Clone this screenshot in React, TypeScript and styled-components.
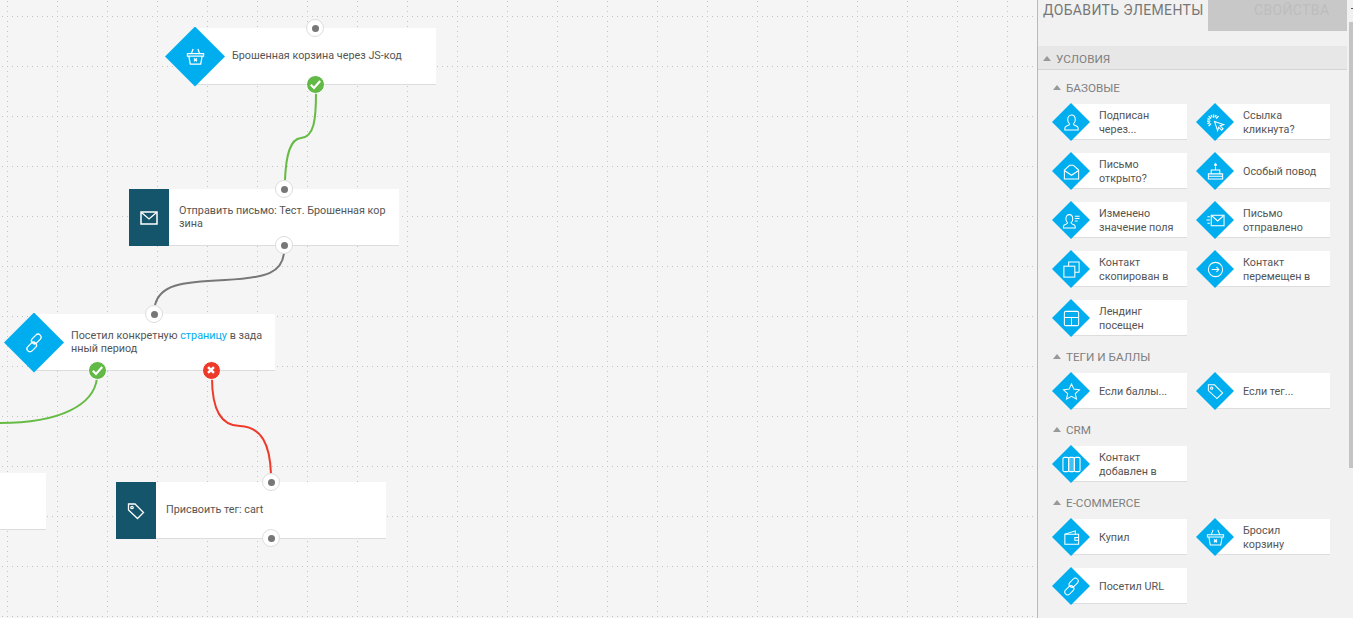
import React from "react";
import styled, { createGlobalStyle } from "styled-components";

const Global = createGlobalStyle`
  html, body { margin: 0; padding: 0; height: 100%; overflow: hidden; background: #f5f5f5; }
  #root { height: 100%; }
  * { box-sizing: border-box; }
`;

const Page = styled.div`
  display: flex;
  width: 1353px;
  height: 618px;
  overflow: hidden;
  font-family: Roboto, "Liberation Sans", sans-serif;
`;
const Canvas = styled.main`
  position: relative;
  flex: 0 0 1037px;
  height: 618px;
  background: #f5f5f5;
  overflow: hidden;
`;
const Layer = styled.svg`
  position: absolute;
  left: 0;
  top: 0;
`;
const Node = styled.div<{ $x: number; $y: number; $w: number }>`
  position: absolute;
  left: ${(p) => p.$x}px;
  top: ${(p) => p.$y}px;
  width: ${(p) => p.$w}px;
  height: 57px;
  display: flex;
  align-items: center;
`;
const NodeDiamond = styled.div`
  flex: 0 0 60px;
  height: 60px;
  margin-right: -30px;
  position: relative;
  z-index: 1;
  display: flex;
  align-items: center;
  justify-content: center;
  background: #00aeef;
  clip-path: polygon(50% 0, 100% 50%, 50% 100%, 0 50%);
  color: #fff;
`;
const NodeSquare = styled.div`
  flex: 0 0 40px;
  height: 57px;
  display: flex;
  align-items: center;
  justify-content: center;
  background: #15556b;
  color: #fff;
`;
const NodeCard = styled.div<{ $pad: number }>`
  flex: 1;
  height: 57px;
  padding: 0 5px 1px ${(p) => p.$pad}px;
  display: flex;
  align-items: center;
  background: #fff;
  border-bottom: 1px solid #ddd;
  font-size: 10.8px;
  line-height: 13px;
  color: #555;
  white-space: nowrap;
`;
const NodeText = styled.span`
  display: block;
`;
const Link = styled.span`
  color: #00aeef;
`;
const Port = styled.div<{ $x: number; $y: number }>`
  position: absolute;
  left: ${(p) => p.$x - 9}px;
  top: ${(p) => p.$y - 9}px;
  width: 18px;
  height: 18px;
  z-index: 2;
  border-radius: 50%;
  background: #fff;
  border: 1px solid #ddd;
  display: flex;
  align-items: center;
  justify-content: center;
  &::after {
    content: "";
    width: 7px;
    height: 7px;
    border-radius: 50%;
    background: #777;
  }
`;
const Result = styled.div<{ $x: number; $y: number; $bg: string }>`
  position: absolute;
  left: ${(p) => p.$x - 9.5}px;
  top: ${(p) => p.$y - 9.5}px;
  width: 19px;
  height: 19px;
  z-index: 2;
  border-radius: 50%;
  background: ${(p) => p.$bg};
  border: 1px solid #fff;
  display: flex;
  align-items: center;
  justify-content: center;
  color: #fff;
`;

const Panel = styled.aside`
  position: relative;
  flex: 0 0 316px;
  height: 618px;
  background: #f1f1f1;
  border-left: 1px solid #b9b9b9;
  overflow: hidden;
  &::after {
    content: "";
    position: absolute;
    right: 0;
    top: 8px;
    width: 2px;
    height: 1px;
    background: #555;
  }
`;
const Tabs = styled.div`
  display: flex;
  height: 31px;
  width: 309px;
`;
const TabActive = styled.div`
  flex: 0 0 170px;
  padding: 1px 0 0 5px;
  font-size: 14px;
  letter-spacing: 0.35px;
  line-height: 19px;
  color: #777;
  white-space: nowrap;
`;
const TabIdle = styled.div`
  flex: 0 0 139px;
  padding: 1px 0 0 46px;
  background: #c8c8c8;
  font-size: 14px;
  letter-spacing: 0.35px;
  line-height: 19px;
  color: #bdbdbd;
`;
const SectionBar = styled.div`
  width: 309px;
  height: 24px;
  margin-top: 15px;
  padding: 2px 0 0 5px;
  display: flex;
  align-items: center;
  gap: 5px;
  background: #e7e7e7;
  border-bottom: 1px solid #d4d4d4;
  font-size: 11.7px;
  color: #808080;
`;
const Caret = styled.i`
  width: 0;
  height: 0;
  border-left: 4px solid transparent;
  border-right: 4px solid transparent;
  border-bottom: 5px solid #999;
  margin-top: -1px;
`;
const Groups = styled.div`
  padding: 10px 0 0 15px;
  display: flex;
  flex-direction: column;
  gap: 13px;
`;
const GroupHead = styled.div`
  height: 16px;
  margin-bottom: 8px;
  display: flex;
  align-items: center;
  gap: 5px;
  font-size: 11.7px;
  color: #808080;
`;
const ItemGrid = styled.div`
  display: grid;
  margin-left: -1px;
  grid-template-columns: 135px 134px;
  column-gap: 9px;
  row-gap: 13px;
`;
const Item = styled.div`
  height: 36px;
  display: flex;
  align-items: center;
`;
const ItemDiamond = styled.div`
  flex: 0 0 38px;
  height: 38px;
  margin-right: -19px;
  position: relative;
  z-index: 1;
  display: flex;
  align-items: center;
  justify-content: center;
  background: #00aeef;
  clip-path: polygon(50% 0, 100% 50%, 50% 100%, 0 50%);
  color: #fff;
`;
const ItemCard = styled.div`
  flex: 1;
  height: 36px;
  padding: 3px 4px 0 28px;
  display: flex;
  align-items: center;
  background: #fff;
  border-bottom: 1px solid #ddd;
  font-size: 10.8px;
  line-height: 14px;
  color: #555;
`;
const ScrollThumb = styled.div`
  position: absolute;
  right: 0;
  top: 22px;
  width: 4px;
  height: 446px;
  background: #c4c4c4;
`;

type IconName =
  | "basket" | "mail" | "link" | "tag" | "user" | "click" | "mailOpen" | "cake"
  | "userEdit" | "mailFast" | "copy" | "move" | "layout" | "star" | "columns" | "wallet";

const paths: Record<IconName, React.ReactNode> = {
  basket: (
    <>
      <path d="M1.500 7h17v2.500h-17z" />
      <path d="M3 9.500 4.500 18h11L17 9.500" />
      <path d="M5.500 7 7.500 2M14.500 7 12.500 2" />
      <path d="M8.500 12l3 3M11.500 12l-3 3" strokeWidth="1.500" />
    </>
  ),
  mail: (
    <>
      <rect x="2" y="4" width="16" height="12" strokeWidth="1.500" />
      <path d="M2.500 4.500 10 11l7.500-6.500" />
    </>
  ),
  link: (
    <>
      <rect x="2.250" y="11" width="11" height="6" rx="3" transform="rotate(-45 7.750 14)" />
      <rect x="6.750" y="3" width="11" height="6" rx="3" transform="rotate(-45 12.250 6)" />
    </>
  ),
  tag: (
    <>
      <path d="M2.500 3h6.500l8.500 8.500-6 6L2.500 9z" />
      <circle cx="6" cy="6.500" r="1.200" />
    </>
  ),
  user: (
    <path d="M3 18v-2.200c0-1.300 1.200-2 3-2.600 1.200-.4 2-.8 2-1.700-1.200-1-2-2.700-2-4.500C6 4 7.600 2 10 2s4 2 4 5c0 1.800-.8 3.500-2 4.500 0 .9.8 1.300 2 1.700 1.800.6 3 1.300 3 2.600V18z" />
  ),
  click: (
    <>
      <path d="M9 9l9.500 3.200-3.700 1.300 3.200 3.200-1.500 1.500-3.200-3.200L12.200 18.500z" />
      <path d="M8 1.500v3.500M2.800 3.300l2.500 2.500M1 8.500h3.500M2.800 13.700l2.500-2.500M13.200 3.300l-2.500 2.500M5.300 2l1 2.500M10.700 2l-1 2.500M1.500 5.800l2.500 1M1.500 11.200l2.500-1" strokeWidth="1.400" />
    </>
  ),
  mailOpen: (
    <>
      <path d="M2.500 8.500 8 3.500h4l5.500 5V18h-15z" />
      <path d="M2.500 9 10 14l7.500-5" />
    </>
  ),
  cake: (
    <>
      <path d="M2.500 12.500h15V18h-15zM5.500 8.500h9v4h-9z" />
      <path d="M2.500 15h15M10 8.500V5" />
      <path d="M10 1.500l1 1.700-1 1.100-1-1.100z" fill="currentColor" />
    </>
  ),
  userEdit: (
    <>
      <path d="M1.500 18v-1.800c0-1.200 1-1.800 2.600-2.300 1.100-.4 1.800-.7 1.800-1.500-1.100-.9-1.800-2.500-1.800-4.100C4.100 5.600 5.500 3.800 7.700 3.800s3.600 1.800 3.600 4.500c0 1.600-.7 3.200-1.800 4.100 0 .8.7 1.100 1.800 1.500 1.600.5 2.600 1.100 2.600 2.300V18z" />
      <path d="M13.500 5.500h5M13.500 8h5M13.500 10.500h3" />
    </>
  ),
  mailFast: (
    <>
      <rect x="5.500" y="4.500" width="13.500" height="11" />
      <path d="M6 5l6.250 5.500L18.500 5" />
      <path d="M1.500 6h2.500M.5 9.500h3.500M1.500 13h2.500" />
    </>
  ),
  copy: (
    <>
      <path d="M7 6.500V2h11v11h-4.500" />
      <rect x="2" y="6.500" width="11.500" height="11.500" />
    </>
  ),
  move: (
    <>
      <circle cx="10" cy="10" r="7.500" />
      <path d="M6 10h7.500M11 7.500l2.500 2.500-2.500 2.500" />
    </>
  ),
  layout: (
    <>
      <rect x="2.500" y="2.500" width="15" height="15" rx="1.500" />
      <path d="M2.500 9h15M10 9v8.500" />
    </>
  ),
  star: <path d="M10 2l2.500 5.500 5.800.7-4.300 4 1.200 5.800L10 15.100 4.800 18 6 12.200l-4.300-4 5.800-.7z" />,
  columns: (
    <>
      <rect x="1" y="2.500" width="6" height="15" rx="1.500" />
      <rect x="7" y="2.500" width="6" height="15" rx="1.500" fill="rgba(255,255,255,.25)" />
      <rect x="13" y="2.500" width="6" height="15" rx="1.500" />
    </>
  ),
  wallet: (
    <>
      <path d="M3 6.500h14.500V17H3z" />
      <path d="M3 6.500 14 3v3.500" />
      <path d="M17.500 10h-4v3h4" />
    </>
  ),
};

const Icon = ({ name, size, stroke = 1.3 }: { name: IconName; size: number; stroke?: number }) => (
  <svg width={size} height={size} viewBox="0 0 20 20" fill="none" stroke="currentColor" strokeWidth={stroke} aria-hidden="true">
    {paths[name]}
  </svg>
);

const Check = () => (
  <svg width="13" height="13" viewBox="0 0 13 13" fill="none" stroke="currentColor" strokeWidth="2.200">
    <path d="M1.800 6.800 5 10l6.200-7" />
  </svg>
);
const Cross = () => (
  <svg width="8" height="8" viewBox="0 0 9 9" fill="none" stroke="currentColor" strokeWidth="2.800">
    <path d="M1.200 1.200l6.600 6.600M7.800 1.200 1.200 7.800" />
  </svg>
);

type ItemData = { icon: IconName; label: React.ReactNode };
const groups: { title: string; items: ItemData[] }[] = [
  {
    title: "БАЗОВЫЕ",
    items: [
      { icon: "user", label: <>Подписан<br />через...</> },
      { icon: "click", label: <>Ссылка<br />кликнута?</> },
      { icon: "mailOpen", label: <>Письмо<br />открыто?</> },
      { icon: "cake", label: "Особый повод" },
      { icon: "userEdit", label: <>Изменено<br />значение поля</> },
      { icon: "mailFast", label: <>Письмо<br />отправлено</> },
      { icon: "copy", label: <>Контакт<br />скопирован в</> },
      { icon: "move", label: <>Контакт<br />перемещен в</> },
      { icon: "layout", label: <>Лендинг<br />посещен</> },
    ],
  },
  {
    title: "ТЕГИ И БАЛЛЫ",
    items: [
      { icon: "star", label: "Если баллы..." },
      { icon: "tag", label: "Если тег..." },
    ],
  },
  { title: "CRM", items: [{ icon: "columns", label: <>Контакт<br />добавлен в</> }] },
  {
    title: "E-COMMERCE",
    items: [
      { icon: "wallet", label: "Купил" },
      { icon: "basket", label: <>Бросил<br />корзину</> },
      { icon: "link", label: "Посетил URL" },
    ],
  },
];

const edges = [
  { d: "M316 93C316 120 314 137 301 138C290 139 286 155 285 180", c: "#66bb44" },
  { d: "M284 253C282 272 268 278 225 280C180 282 160 285 155 305", c: "#777" },
  { d: "M97 378C94 405 60 423 0 423", c: "#66bb44" },
  { d: "M212 378C212 410 222 426 240 426C262 427 270 445 271 474", c: "#ee3a2b" },
];

export default function App() {
  return (
    <Page>
      <Global />
      <Canvas>
        <Layer width="1037" height="618">
          <defs>
            <pattern id="grid" x="2" y="1" width="50" height="50" patternUnits="userSpaceOnUse">
              {Array.from({ length: 10 }, (_, i) => (
                <rect key={`h${i}`} x={i * 5} y="15" width="1" height="1" fill="#c2c2c2" />
              ))}
              {Array.from({ length: 10 }, (_, i) => (
                <rect key={`v${i}`} x="5" y={i * 5} width="1" height="1" fill="#c2c2c2" />
              ))}
            </pattern>
          </defs>
          <rect width="1037" height="618" fill="url(#grid)" />
          {edges.map((e) => (
            <path key={e.d} d={e.d} fill="none" stroke={e.c} strokeWidth="2" />
          ))}
        </Layer>

        <Node $x={165} $y={28} $w={271}>
          <NodeDiamond><Icon name="basket" size={19} /></NodeDiamond>
          <NodeCard $pad={37}><NodeText>Брошенная корзина через JS-код</NodeText></NodeCard>
        </Node>
        <Port $x={315} $y={28} />
        <Result $x={315} $y={84} $bg="#62b946"><Check /></Result>

        <Node $x={129} $y={189} $w={270}>
          <NodeSquare><Icon name="mail" size={20} /></NodeSquare>
          <NodeCard $pad={10}><NodeText>Отправить письмо: Тест. Брошенная кор<br />зина</NodeText></NodeCard>
        </Node>
        <Port $x={284} $y={189} />
        <Port $x={284} $y={245} />

        <Node $x={4} $y={314} $w={271}>
          <NodeDiamond><Icon name="link" size={20} /></NodeDiamond>
          <NodeCard $pad={37}>
            <NodeText>Посетил конкретную <Link>страницу</Link> в зада<br />нный период</NodeText>
          </NodeCard>
        </Node>
        <Port $x={154} $y={314} />
        <Result $x={97} $y={370} $bg="#62b946"><Check /></Result>
        <Result $x={211} $y={370} $bg="#ee3a2b"><Cross /></Result>

        <Node $x={-30} $y={473} $w={76}>
          <NodeCard $pad={10} />
        </Node>

        <Node $x={116} $y={482} $w={270}>
          <NodeSquare><Icon name="tag" size={20} /></NodeSquare>
          <NodeCard $pad={10}><NodeText>Присвоить тег: cart</NodeText></NodeCard>
        </Node>
        <Port $x={271} $y={482} />
        <Port $x={271} $y={538} />
      </Canvas>

      <Panel>
        <Tabs>
          <TabActive>ДОБАВИТЬ ЭЛЕМЕНТЫ</TabActive>
          <TabIdle>СВОЙСТВА</TabIdle>
        </Tabs>
        <SectionBar><Caret />УСЛОВИЯ</SectionBar>
        <Groups>
          {groups.map((g) => (
            <section key={g.title}>
              <GroupHead><Caret />{g.title}</GroupHead>
              <ItemGrid>
                {g.items.map((it) => (
                  <Item key={it.icon}>
                    <ItemDiamond><Icon name={it.icon} size={19} stroke={1.1} /></ItemDiamond>
                    <ItemCard><span>{it.label}</span></ItemCard>
                  </Item>
                ))}
              </ItemGrid>
            </section>
          ))}
        </Groups>
        <ScrollThumb />
      </Panel>
    </Page>
  );
}
